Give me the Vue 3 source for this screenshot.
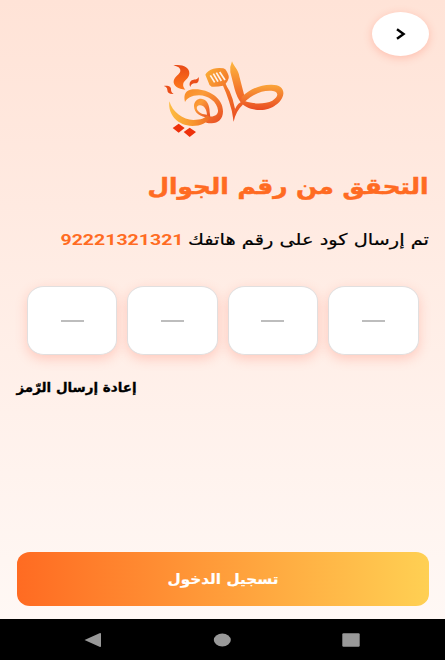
<script setup>
const digits = [1, 2, 3, 4]
</script>

<template>
  <main class="screen" dir="rtl">
    <header class="top">
      <button class="back" aria-label="رجوع">
        <svg width="12" height="14" viewBox="0 0 12 14"><path d="M2 2.2 8.6 7 2 11.8" /></svg>
      </button>
    </header>

    <div class="brand">
      <svg class="logo" viewBox="0 0 420 285" role="img" aria-label="طاهي">
        <defs>
          <linearGradient id="steam" x1="0" y1="0" x2="0" y2="1">
            <stop offset="0" stop-color="#e94a16" /><stop offset="1" stop-color="#ff7a1c" />
          </linearGradient>
          <linearGradient id="tool" x1="0" y1="0" x2="1" y2="1">
            <stop offset="0" stop-color="#fbb035" /><stop offset=".5" stop-color="#f47b2b" /><stop offset="1" stop-color="#e84e1f" />
          </linearGradient>
          <linearGradient id="blade" x1="0" y1="0" x2="0" y2="1">
            <stop offset="0" stop-color="#fdb840" /><stop offset=".5" stop-color="#f3722a" /><stop offset="1" stop-color="#e94b22" />
          </linearGradient>
          <linearGradient id="loop" x1="0" y1="0" x2="0" y2="1">
            <stop offset="0" stop-color="#fba63a" /><stop offset="1" stop-color="#e94b22" />
          </linearGradient>
          <linearGradient id="ring" x1="0" y1="0" x2="1" y2="1">
            <stop offset="0" stop-color="#f98a25" /><stop offset=".3" stop-color="#fb9c38" /><stop offset="1" stop-color="#e84a22" />
          </linearGradient>
          <linearGradient id="bowl" x1="0" y1="0" x2="1" y2="0">
            <stop offset="0" stop-color="#fdbd43" /><stop offset=".6" stop-color="#f8942d" /><stop offset="1" stop-color="#ee6a25" />
          </linearGradient>
        </defs>
        <path fill="url(#steam)" d="M55 40C78 35 105 44 103 65C101 80 88 85 85 94C83 102 86 108 91 113C70 111 54 102 56 87C58 74 75 67 76 57C77 48 68 43 55 40Z" />
        <path fill="#eb4e19" d="M131 75C133 89 128 95 119 94C112 94 108 98 106 105C101 96 105 86 113 84C121 82 127 83 131 75ZM26 102C39 99 49 104 48 112C48 119 50 123 56 126C44 127 37 122 37 114C37 108 33 104 26 102Z" />
        <path fill="url(#tool)" d="M151 68Q153 64 160 58Q178 45 205 49Q212 51 215 58Q223 72 221 79Q219 88 212 95Q216 105 224 118Q234 140 240 170L236 209Q233 179 222 148Q213 120 204 101Q186 105 170 104Q162 101 160 90Z" />
        <path fill="url(#blade)" d="M231 28C236 42 251 54 253 73L269 135Q271 147 262 160Q243 177 236 209L235 185Q243 158 257 151Q246 137 239 112L226 61Q224 43 231 28Z" />
        <path class="slots" d="m166 70 13 21m-4-26 14 24m-5-27 15 25m-5-27 16 24" />
        <path fill="url(#loop)" fill-rule="evenodd" d="M260 135Q297 99 347 98C374 97 387 109 385 126C382 151 350 174 317 174C286 174 268 163 258 153ZM271 148C296 157 332 156 352 146C371 135 372 120 354 117C324 113 292 127 271 148Z" />
        <path fill="url(#ring)" fill-rule="evenodd" d="M90 150C84 128 93 114 113 112C155 108 204 135 204 178C204 203 188 215 168 214C158 214 150 211 145 206L160 193C176 196 190 190 189 175C187 150 160 130 132 130C108 131 97 138 90 150Z" />
        <path fill="url(#ring)" fill-rule="evenodd" d="M160 196C137 196 117 183 117 162C117 148 127 140 138 140C156 141 164 160 164 180L166 196ZM156 188C155 171 147 161 136 160C127 160 123 166 127 174C132 183 145 188 156 188Z" />
        <path fill="url(#bowl)" d="M43 148C52 180 84 204 115 204C138 204 150 199 156 190L166 195C157 213 137 222 112 222C70 221 38 190 43 148Z" />
        <path fill="#ee310b" d="m71 215 18 13-18 14-18-14Zm33 12 19 13-19 15-18-15Z" />
      </svg>
    </div>

    <h1 class="title">
      <svg width="281" height="40" viewBox="0 0 281 40">
        <text x="280.5" y="25" textLength="281" lengthAdjust="spacingAndGlyphs">التحقق من رقم الجوال</text>
      </svg>
    </h1>

    <p class="message">
      <svg width="241" height="30" viewBox="0 0 241 30">
        <text x="241" y="20" textLength="241" lengthAdjust="spacingAndGlyphs">تم إرسال كود على رقم هاتفك</text>
      </svg>
      <svg class="phone" width="123" height="30" viewBox="0 0 123 30">
        <text x="0.5" y="20" textLength="123" lengthAdjust="spacingAndGlyphs">92221321321</text>
      </svg>
    </p>

    <section class="code">
      <div v-for="digit in digits" :key="digit" class="cell"><i></i></div>
    </section>

    <div class="resend">
      <svg width="120" height="28" viewBox="0 0 120 28">
        <text x="119.5" y="18" textLength="120" lengthAdjust="spacingAndGlyphs">إعادة إرسال الرّمز</text>
      </svg>
    </div>

    <button class="submit">
      <svg width="111" height="30" viewBox="0 0 111 30">
        <text x="111.5" y="19.5" textLength="111" lengthAdjust="spacingAndGlyphs">تسجيل الدخول</text>
      </svg>
    </button>

    <nav class="system" dir="ltr">
      <svg width="18" height="16" viewBox="0 0 18 16"><path d="M.5 8 15.5 1.2Q17 .5 17 2V14Q17 15.5 15.5 14.8Z" /></svg>
      <svg width="18" height="14" viewBox="0 0 18 14"><ellipse cx="9.3" cy="7" rx="8.5" ry="6.5" /></svg>
      <svg width="18" height="14" viewBox="0 0 18 14"><rect x=".3" y=".3" width="17.4" height="13.4" rx="1.2" /></svg>
    </nav>
  </main>
</template>

<style>
body { margin: 0; }
</style>

<style scoped>
.screen {
  display: flex;
  flex-direction: column;
  box-sizing: border-box;
  width: 445px;
  height: 660px;
  overflow: hidden;
  background: linear-gradient(#ffe3d7 0, #fff8f5 619px);
  font-family: "DejaVu Sans", "Noto Sans", sans-serif;
}
svg { display: block; overflow: visible; }
button { border: 0; padding: 0; font: inherit; }
.top { height: 52px; padding: 12px 16px 0; box-sizing: border-box; }
.back {
  display: flex;
  align-items: center;
  justify-content: center;
  width: 57px;
  height: 44px;
  border-radius: 50%;
  background: #fff;
  box-shadow: 0 2px 9px rgba(255, 108, 82, .32);
}
.back path { fill: none; stroke: #000; stroke-width: 2.4; }
.brand { height: 95px; padding-right: 150px; }
.logo { width: 140px; height: 95px; }
.slots { fill: none; stroke: #fff3e9; stroke-width: 5; }
.title { height: 40px; margin: 22px 16px 0; font-size: 22px; font-weight: 700; }
.title text { fill: #ff6b22; stroke: #ff6b22; stroke-width: .5; }
.message {
  display: flex;
  gap: 5px;
  height: 30px;
  margin: 16px 16px 0;
  font-size: 16px;
}
.message text { stroke: #000; stroke-width: .2; }
.phone { direction: ltr; font-family: Roboto, sans-serif; font-size: 15px; font-weight: 700; }
.phone text { fill: #ff6b22; stroke: none; }
.code { display: flex; gap: 10px; padding: 31px 26.5px 0 27px; }
.cell {
  display: flex;
  flex: 1;
  align-items: center;
  justify-content: center;
  height: 67px;
  border: 1px solid #e1dfdf;
  border-radius: 17px / 15px;
  background: #fff;
  box-shadow: 0 4px 12px rgba(255, 108, 82, .28);
}
.cell i { width: 23px; height: 2px; background: #bdbdbd; }
.resend { display: flex; justify-content: flex-end; padding: 19px 16.5px 0; font-size: 13.5px; font-weight: 700; }
.resend text { stroke: #000; stroke-width: .3; }
.submit {
  display: flex;
  align-items: center;
  justify-content: center;
  height: 54px;
  margin: auto 16px 13px 16.5px;
  border-radius: 13px / 12px;
  background: linear-gradient(90deg, #ff6b22, #ffd053);
  font-size: 14px;
  font-weight: 700;
}
.submit text { fill: #fff; stroke: #fff; stroke-width: .2; }
.system {
  display: flex;
  align-items: center;
  justify-content: space-between;
  height: 41px;
  flex: none;
  padding: 0 85px 0 84px;
  box-sizing: border-box;
  background: #000;
}
.system svg { fill: #999; }
</style>
